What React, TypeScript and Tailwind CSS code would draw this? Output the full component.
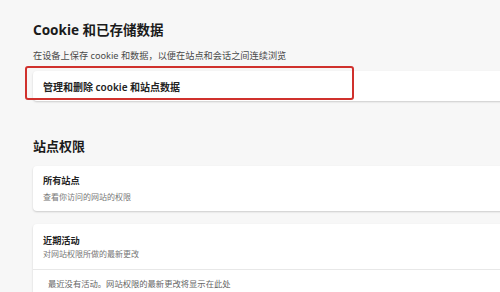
import React from "react";

const FONT = { fontFamily: '"Noto Sans", "Noto Sans CJK SC", sans-serif' };

function Card({ children, className = "" }: { children: React.ReactNode; className?: string }) {
  return (
    <div className={`relative bg-white rounded-[4px] shadow-[0_1px_2px_rgba(0,0,0,0.18)] ${className}`}>
      {children}
    </div>
  );
}

export default function App() {
  return (
    <div className="w-[500px] h-[292px] overflow-hidden bg-[#f7f7f7]" style={FONT}>
      <div className="w-[540px] pl-[33px] pt-[20px]">
        <h2 className="text-[13.5px] leading-[20px] font-bold text-[#1b1b1b]">Cookie 和已存储数据</h2>
        <p className="mt-[9px] text-[9.2px] leading-[14px] text-[#4a4a4a]">
          在设备上保存 cookie 和数据，以便在站点和会话之间连续浏览
        </p>
        <Card className="mt-[8px] h-[30px] flex items-center pl-[10px] pt-[2px]">
          <span className="text-[10px] font-semibold text-[#222]">管理和删除 cookie 和站点数据</span>
          <div className="absolute left-[-8px] top-[-5px] w-[329px] h-[34px] border-2 border-[#d0312d] rounded-[3px]" />
        </Card>

        <h2 className="mt-[35px] text-[13px] leading-[20px] font-bold text-[#1b1b1b]">站点权限</h2>
        <Card className="mt-[10px] h-[45px] flex flex-col pl-[10px] pt-[8px]">
          <span className="text-[9.2px] leading-[14px] font-semibold text-[#222]">所有站点</span>
          <span className="mt-[2px] text-[8px] leading-[14px] text-[#777]">查看你访问的网站的权限</span>
        </Card>

        <Card className="mt-[13px]">
          <div className="h-[45px] flex flex-col pl-[10px] pt-[10px]">
            <span className="text-[9.2px] leading-[13px] font-semibold text-[#222]">近期活动</span>
            <span className="text-[8px] leading-[13px] text-[#777]">对网站权限所做的最新更改</span>
          </div>
          <div className="border-t border-[#e8e8e8] h-[40px] pl-[15px] pt-[9px]">
            <p className="text-[8.3px] leading-[10px] text-[#666]">最近没有活动。网站权限的最新更改将显示在此处</p>
          </div>
        </Card>
      </div>
    </div>
  );
}
